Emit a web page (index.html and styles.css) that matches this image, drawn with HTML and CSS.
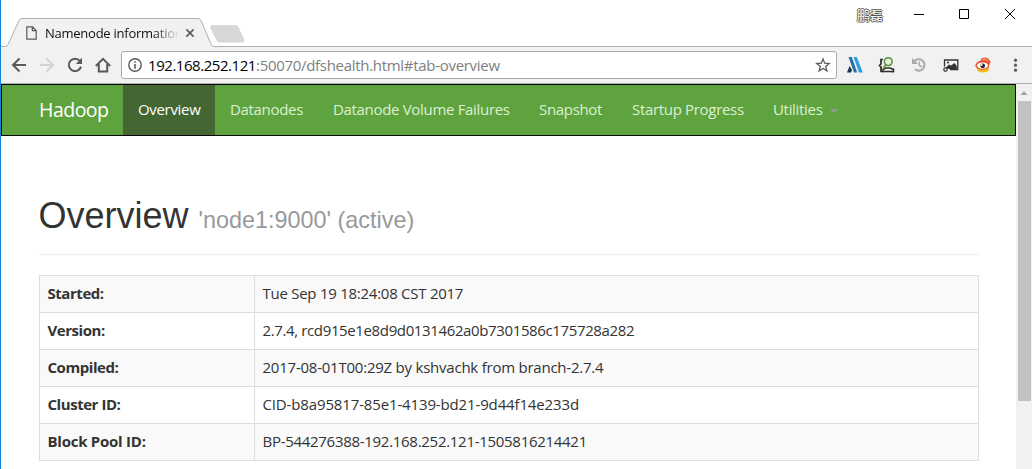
FILE: index.html
```html
<!DOCTYPE html>
<html lang="en">
<head>
<meta charset="utf-8">
<title>Namenode information</title>
<link rel="stylesheet" href="styles.css">
</head>
<body>
<div class="window">
  <header class="titlebar">
    <svg class="tab-shape" width="250" height="30" viewBox="0 0 250 30">
      <path d="M0 28.500H4.500Q6 28.500 7 26.500L18 2.500Q19 .5 21 .5H197Q199 .5 200 2.500L210 26Q211 28.500 213 28.500H250V30H0Z" fill="#f1f1f1"/>
      <path d="M-1 28.500H4.500Q6 28.500 7 26.500L18 2.500Q19 .5 21 .5H197Q199 .5 200 2.500L210 26Q211 28.500 213 28.500H251" fill="none" stroke="#b0b0b0"/>
      <path d="M211 7.500H235Q236.500 7.500 237 9L243 22Q243.500 24 241.500 24H218Q216.500 24 216 22.500L209.700 9.500Q209 7.500 211 7.500Z" fill="#d8d8d8" stroke="#cbcbcb" stroke-width=".6"/>
    </svg>
    <div class="tab">
      <svg width="11" height="14" viewBox="0 0 11 14" fill="none" stroke="#5a5a5a" stroke-width="1.200"><path d="M.8.8H6.500L10.200 4.500V13.200H.8ZM6.300.8V4.700H10.200"/></svg>
      <span class="tab-title">Namenode information</span>
      <svg class="tab-close" width="8" height="8" viewBox="0 0 8 8" stroke="#5a5a5a" stroke-width="1.600"><path d="M.4.4L7.600 7.600M7.600.4L.4 7.600"/></svg>
    </div>
    <div class="controls">
      <span class="user">鹏磊</span>
      <svg width="10" height="10" viewBox="0 0 10 10" stroke="#000"><path d="M0 5.500H10"/></svg>
      <svg width="10" height="10" viewBox="0 0 10 10" stroke="#000" fill="none"><path d="M.5.5H9.500V9.500H.5Z"/></svg>
      <svg class="close" width="10" height="10" viewBox="0 0 10 10" stroke="#000" fill="none"><path d="M0 0L10 10M10 0L0 10"/></svg>
    </div>
  </header>
  <div class="toolbar">
    <div class="nav-icons">
      <svg width="16" height="16" viewBox="0 0 16 16" fill="none" stroke="#5a5a5a" stroke-width="2"><path d="M15 8H2.500M8.500 1.500L2 8L8.500 14.500"/></svg>
      <svg width="16" height="16" viewBox="0 0 16 16" fill="none" stroke="#d2d2d2" stroke-width="2"><path d="M1 8H13.500M7.500 1.500L14 8L7.500 14.500"/></svg>
      <svg width="16" height="16" viewBox="0 0 16 16"><path d="M12.900 4A6.200 6.200 0 1 0 14 9.600" fill="none" stroke="#5a5a5a" stroke-width="2"/><path d="M15 .8V7H8.800Z" fill="#5a5a5a"/></svg>
      <svg width="16" height="16" viewBox="0 0 16 16" fill="none" stroke="#5a5a5a" stroke-width="2"><path d="M.8 9L8 1.800L15.200 9M3.800 7V14.500H12.200V7"/></svg>
    </div>
    <div class="address">
      <svg width="14" height="14" viewBox="0 0 14 14"><circle cx="7" cy="7" r="6.200" fill="none" stroke="#5a5a5a" stroke-width="1.400"/><path d="M6.200 3.200H7.800V4.800H6.200ZM6.200 6H7.800V10.800H6.200Z" fill="#5a5a5a"/></svg>
      <span class="url"><span class="host">192.168.252.121</span><span class="path">:50070/dfshealth.html#tab-overview</span></span>
      <svg class="star" width="14" height="14" viewBox="0 0 14 14" fill="none" stroke="#5a5a5a" stroke-width="1.300"><path d="M7 1L8.700 5.200L13.200 5.500L9.700 8.400L10.900 12.900L7 10.400L3.100 12.900L4.300 8.400L.8 5.500L5.300 5.200Z"/></svg>
    </div>
    <div class="extensions">
      <svg width="16" height="16" viewBox="0 0 16 16"><path d="M0 15.500L2.600 9L5 13L4 15.500Z" fill="#17324d"/><path d="M1.500 0H4.800L10.200 15.500H7Z" fill="#2b6fa8"/><path d="M6.500 0H9.800L15.800 15.500H12Z" fill="#2aa0dc"/></svg>
      <svg width="16" height="16" viewBox="0 0 16 16" fill="none"><path d="M4 2.500H2V7L.5 8.500L2 10V14.500H4.500M12 14.500H14V11.500" stroke="#2b2b2b" stroke-width="1.700"/><path d="M4 14.500V12.500L7 11H11L14.500 12.500V14.500Z" fill="#fff" stroke="#2b2b2b" stroke-width="1.500"/><path d="M7 7.500L4 12" stroke="#6a9d40" stroke-width="2"/><circle cx="9.300" cy="4.600" r="3.900" fill="#e4f1d8" stroke="#58903a" stroke-width="1.500"/></svg>
      <svg width="16" height="16" viewBox="0 0 16 16" fill="none" stroke="#aaa"><path d="M3.200 4.500A5.700 5.700 0 1 1 4 12.300" stroke-width="2.100"/><path d="M1 1V7H7Z" fill="#aaa" stroke="none"/><path d="M8.300 4.500V8.500L11 9.800" stroke-width="1.500"/></svg>
      <svg width="16" height="16" viewBox="0 0 16 16" fill="none" stroke="#333"><path d="M1.500 9.500V3H14.800V12.500H7" stroke-width="1.300"/><path d="M2.500 11L6 7.500L8 8.500L11.500 6L13.800 9V12H6Z" fill="#333" stroke="none"/><circle cx="5" cy="5.500" r="1" fill="#333" stroke="none"/><circle cx="2.500" cy="12.500" r="1.700" fill="#fff" stroke-width="1.200"/></svg>
      <svg width="16" height="16" viewBox="0 0 16 16"><ellipse cx="8" cy="12.500" rx="6" ry="3" fill="#f7b719"/><path d="M.2 8.500Q2 4 6 3.500Q5 1.500 8.500.8Q12-.2 14 2.500Q16.500 5 14.500 7.500L13.500 11Q10 13.500 5 12.500Q1 12 .2 8.500Z" fill="#ec5534"/><path d="M7.500 2.500Q11 1 13 4.500" fill="none" stroke="#fbc0a0"/><ellipse cx="7.500" cy="8.600" rx="5.400" ry="3.200" fill="#fff"/><circle cx="7.700" cy="8.800" r="2.400" fill="#222"/><circle cx="6.700" cy="8.100" r="1" fill="#fff"/></svg>
      <svg width="16" height="16" viewBox="0 0 16 16" fill="#5a5a5a"><circle cx="8.500" cy="3.200" r="1.600"/><circle cx="8.500" cy="8.200" r="1.600"/><circle cx="8.500" cy="13.200" r="1.600"/></svg>
    </div>
  </div>
  <div class="viewport">
    <main class="page">
      <nav class="navbar">
        <a class="brand">Hadoop</a>
        <a class="link active w-overview">Overview</a>
        <a class="link w-datanodes">Datanodes</a>
        <a class="link w-failures">Datanode Volume Failures</a>
        <a class="link w-snapshot">Snapshot</a>
        <a class="link w-startup">Startup Progress</a>
        <a class="link">Utilities<span class="caret"></span></a>
      </nav>
      <section class="content">
        <h1>Overview <small>'node1:9000' (active)</small></h1>
        <table>
          <tr class="started"><th>Started:</th><td>Tue Sep 19 18:24:08 CST 2017</td></tr>
          <tr class="version"><th>Version:</th><td>2.7.4, rcd915e1e8d9d0131462a0b7301586c175728a282</td></tr>
          <tr class="compiled"><th>Compiled:</th><td>2017-08-01T00:29Z by kshvachk from branch-2.7.4</td></tr>
          <tr class="cluster"><th>Cluster ID:</th><td>CID-b8a95817-85e1-4139-bd21-9d44f14e233d</td></tr>
          <tr class="pool"><th>Block Pool ID:</th><td>BP-544276388-192.168.252.121-1505816214421</td></tr>
        </table>
      </section>
    </main>
    <aside class="scrollbar">
      <svg width="16" height="17" viewBox="0 0 16 17"><path d="M4.500 11L8 7L11.500 11Z" fill="#a3a3a3"/></svg>
      <div class="thumb"></div>
    </aside>
  </div>
</div>
</body>
</html>
```
FILE: styles.css
```css
* { box-sizing: border-box; }
body { margin: 0; background: #fff; font-family: "Open Sans", "Noto Sans CJK SC", sans-serif; overflow: hidden; }
svg { display: block; flex: none; overflow: visible; }
.window { width: 1032px; height: 469px; display: flex; flex-direction: column; border-left: 1px solid #1883d7; overflow: hidden; }
.titlebar { height: 47px; flex: none; display: flex; justify-content: space-between; position: relative; border-bottom: 1px solid #b0b0b0; }
.tab-shape { position: absolute; left: 0; top: 18px; overflow: hidden; }
.tab { position: relative; display: flex; align-items: center; height: 30px; margin-top: 18px; padding-left: 25px; }
.tab-title { width: 134px; margin-left: 8px; font-size: 13px; letter-spacing: -0.25px; line-height: 18px; white-space: nowrap; color: #111; -webkit-mask-image: linear-gradient(90deg, #000 108px, transparent 134px); mask-image: linear-gradient(90deg, #000 108px, transparent 134px); }
.tab-close { margin-left: 7px; }
.controls { display: flex; align-items: center; height: 28px; padding-right: 17px; }
.controls svg { margin-left: 35px; }
.controls svg:first-of-type { margin-left: 30px; }
.controls .close { margin-left: 36px; }
.user { width: 27px; font: 13px/16px "Noto Sans CJK SC", sans-serif; color: #fff; text-shadow: 1px 0 #555, -1px 0 #555, 0 1px #555, 0 -1px #555; padding-top: 1px; }
.toolbar { height: 37px; flex: none; display: flex; align-items: center; background: #f1f1f1; border-bottom: 1px solid #b0b0b0; }
.nav-icons { display: flex; gap: 12px; margin-left: 10px; }
.address { display: flex; align-items: center; width: 716px; height: 28px; margin-left: 10px; padding: 0 6px; background: #fff; border: 1px solid #a9a9a9; border-radius: 3px; }
.url { margin-left: 6px; font-size: 15px; line-height: 24px; padding-bottom: 1px; color: #808080; white-space: nowrap; letter-spacing: -0.3px; }
.host { color: #000; letter-spacing: -0.45px; }
.star { margin-left: auto; }
.extensions { display: flex; gap: 16px; margin-left: 10px; }
.viewport { display: flex; flex: 1; min-height: 0; }
.page { width: 1015px; }
.navbar { height: 52px; display: flex; padding-left: 37px; background: #5fa33e; border: 1px solid #080808; }
.brand { width: 84px; font-size: 19.500px; letter-spacing: -0.5px; line-height: 50px; color: #fff; }
.link { padding: 0 15px; font-size: 15px; letter-spacing: -0.32px; line-height: 48px; color: #dcf0d3; white-space: nowrap; }
.active { background: #446633; color: #fff; }
.w-overview { width: 92px; }
.w-datanodes { width: 103px; }
.w-failures { width: 206px; }
.w-snapshot { width: 93px; }
.w-startup { width: 141px; }
.caret { display: inline-block; margin-left: 8px; vertical-align: middle; border-top: 4px solid #999; border-left: 4px solid transparent; border-right: 4px solid transparent; }
.content { padding: 60px 37px 0 38px; }
h1 { margin: 0 0 20px; height: 59px; font: 36px/40px "Liberation Sans", sans-serif; color: #333; border-bottom: 1px solid #eee; text-indent: -0.5px; }
small { font-size: 23.400px; color: #999; }
table { width: 940px; border-collapse: collapse; table-layout: fixed; font-size: 15px; line-height: 20px; color: #333; }
th, td { height: 37px; padding: 7px 7.500px 9px; border: 1px solid #ddd; text-align: left; white-space: nowrap; }
th { width: 215px; font-weight: 700; letter-spacing: -0.45px; }
tr:nth-child(odd) { background: #f9f9f9; }
.started td { letter-spacing: -0.26px; }
.version td { letter-spacing: -0.37px; }
.compiled td { letter-spacing: -0.23px; }
.cluster td { letter-spacing: -0.14px; }
.pool td { letter-spacing: -0.29px; }
.pool th { letter-spacing: -0.25px; }
.scrollbar { width: 16px; background: #f1f1f1; }
.thumb { width: 13px; height: 300px; margin-left: 2px; background: #c1c1c1; }
```
